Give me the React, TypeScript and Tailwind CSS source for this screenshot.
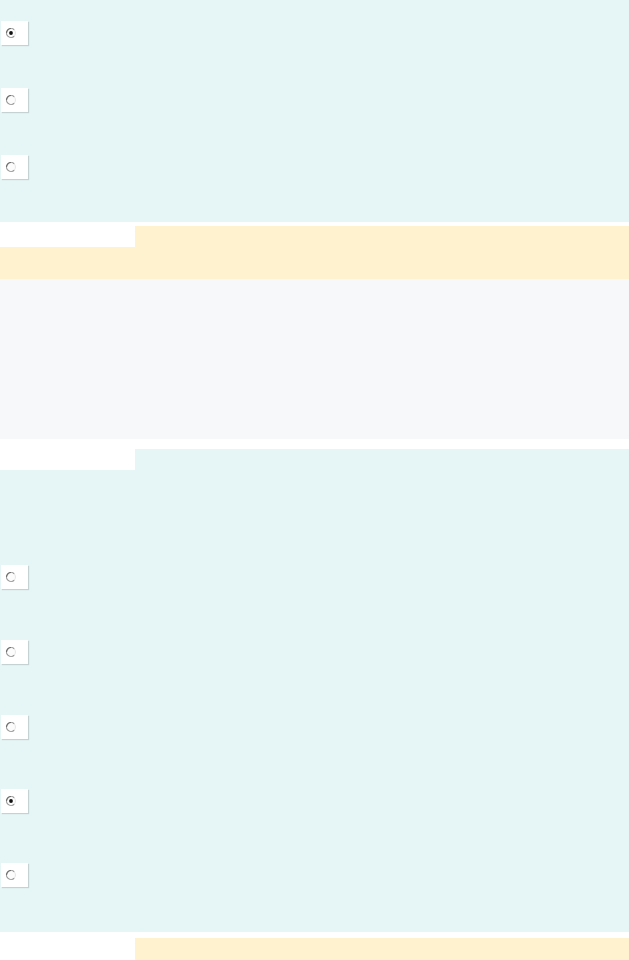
import React from "react";

function Radio({ checked, className = "" }: { checked?: boolean; className?: string }) {
  return (
    <div className={"ml-[1px] flex h-[24px] w-[27px] items-center bg-white pl-[4px] shadow-[1px_1px_1px_rgba(0,0,0,0.14)] " + className}>
      <svg width="12" height="12" viewBox="0 0 12 12">
        <circle cx="6" cy="6" r="4.5" fill="#fcfcfc" stroke="#e6e6e6" strokeWidth="1" />
        <path d="M9.2 2.8 A4.5 4.5 0 1 0 9.2 9.2" fill="none" stroke="#9a9a9a" strokeWidth="1.2" />
        <path d="M6 1.5 A4.5 4.5 0 0 0 1.5 6" fill="none" stroke="#707070" strokeWidth="1.2" />
        {checked && <circle cx="6" cy="6" r="1.9" fill="#111" />}
      </svg>
    </div>
  );
}

export default function App() {
  return (
    <div className="w-[629px] h-[960px] overflow-hidden bg-white font-['Liberation_Sans',sans-serif]">
      {/* Section A */}
      <div className="flex h-[222px] flex-col gap-[43px] bg-[#e6f5f6] pt-[21px]">
        <Radio checked />
        <Radio />
        <Radio />
      </div>

      {/* Section B */}
      <div className="mt-[4px]">
        <div className="flex h-[21px]">
          <div className="w-[135px] bg-white" />
          <div className="flex-1 bg-[#fff2cf]" />
        </div>
        <div className="h-[32px] bg-[#fff2cf]" />
        <div className="h-[160px] bg-[#f7f8fa]" />
      </div>

      {/* Section C */}
      <div className="mt-[10px]">
        <div className="flex h-[21px]">
          <div className="w-[135px] bg-white" />
          <div className="flex-1 bg-[#e6f5f6]" />
        </div>
        <div className="flex h-[462px] flex-col bg-[#e6f5f6] pt-[95px]">
          <Radio />
          <Radio className="mt-[51px]" />
          <Radio className="mt-[51px]" />
          <Radio checked className="mt-[50px]" />
          <Radio className="mt-[50px]" />
        </div>
      </div>

      {/* Section D */}
      <div className="mt-[6px]">
        <div className="flex h-[22px]">
          <div className="w-[135px] bg-white" />
          <div className="flex-1 bg-[#fff2cf]" />
        </div>
      </div>
    </div>
  );
}
